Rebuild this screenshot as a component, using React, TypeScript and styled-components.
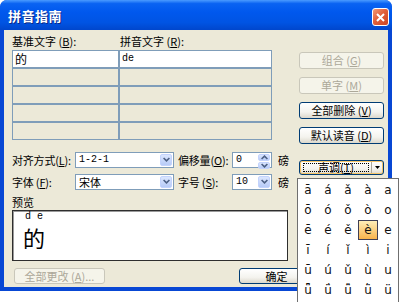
import styled, { createGlobalStyle } from "styled-components";

const GlobalStyle = createGlobalStyle`
  html, body {
    margin: 0;
    padding: 0;
    background: #fff;
    overflow: hidden;
  }
  body {
    font-family: "Noto Sans CJK SC", "Liberation Sans", sans-serif;
    font-size: 11px;
    color: #000;
  }
`;

const Stage = styled.div`
  position: relative;
  width: 400px;
  height: 302px;
  overflow: hidden;
`;

const Window = styled.div`
  width: 392px;
  height: 291px;
  display: flex;
  flex-direction: column;
  border-radius: 7px 7px 0 0;
  overflow: hidden;
  background: #0847d4;
`;

const TitleBar = styled.div`
  height: 30px;
  flex-shrink: 0;
  display: flex;
  align-items: center;
  padding: 0 3px 0 8px;
  background: linear-gradient(#4a9bff 0%, #0a63f2 12%, #0058ee 40%, #0054e3 75%, #0046cc 100%);
`;

const Title = styled.div`
  color: #fff;
  font-size: 13px;
  font-weight: bold;
  letter-spacing: 0.5px;
  text-shadow: 1px 1px 0 #0a2a8a;
`;

const CloseBtn = styled.div`
  margin-left: auto;
  margin-top: 4px;
  width: 17px;
  height: 18px;
  box-sizing: border-box;
  border: 1px solid #fff;
  border-radius: 3px;
  background: linear-gradient(135deg, #f09a78 0%, #e1603b 45%, #cc4422 100%);
  display: flex;
  align-items: center;
  justify-content: center;
`;

const Client = styled.div`
  flex: 1;
  margin: 0 4px 4px;
  padding: 0 4px 0 8px;
  background: #ece9d8;
  display: flex;
  flex-direction: column;
`;

const Upper = styled.div`
  display: flex;
  height: 160px;
`;

const LeftCol = styled.div`
  width: 284px;
  display: flex;
  flex-direction: column;
`;

const RightCol = styled.div`
  margin-left: auto;
  width: 85px;
  display: flex;
  flex-direction: column;
  gap: 8px;
  padding-top: 22px;
`;

const HeaderRow = styled.div`
  display: grid;
  grid-template-columns: 107px 153px;
  height: 20px;
  padding-top: 2px;
  box-sizing: border-box;
  line-height: 18px;
`;

const HeaderLabel = styled.span<{ $pad?: number }>`
  padding-left: ${(p) => p.$pad ?? 0}px;
  white-space: nowrap;
`;

const TextGrid = styled.div`
  display: grid;
  grid-template-columns: 107px 153px;
  grid-auto-rows: 18px;
`;

const Cell = styled.div<{ $active?: boolean; $mono?: boolean }>`
  box-sizing: border-box;
  border: 1px solid #7f9db9;
  background: ${(p) => (p.$active ? "#fff" : "#ece9d8")};
  padding-left: 2px;
  line-height: 15px;
  font-size: ${(p) => (p.$mono ? "10px" : "12px")};
  font-family: ${(p) =>
    p.$mono ? '"Liberation Mono", monospace' : '"Noto Sans CJK SC", sans-serif'};
`;

const OptionRow = styled.div<{ $top: number }>`
  display: flex;
  align-items: center;
  height: 17px;
  margin-top: ${(p) => p.$top}px;
`;

const FieldLabel = styled.span<{ $w: number; $left?: number }>`
  width: ${(p) => p.$w}px;
  margin-left: ${(p) => p.$left ?? 0}px;
  flex-shrink: 0;
  white-space: nowrap;
  letter-spacing: -0.2px;
`;

const Combo = styled.div<{ $w: number }>`
  width: ${(p) => p.$w}px;
  height: 16px;
  flex-shrink: 0;
  box-sizing: border-box;
  border: 1px solid #7f9db9;
  background: #fff;
  display: flex;
  align-items: stretch;
  padding: 1px;
`;

const ComboText = styled.span<{ $cjk?: boolean }>`
  flex: 1;
  padding-left: 2px;
  line-height: 12px;
  font-size: ${(p) => (p.$cjk ? "11px" : "10px")};
  font-family: ${(p) =>
    p.$cjk ? '"Noto Sans CJK SC", sans-serif' : '"Liberation Mono", monospace'};
`;

const ArrowBtn = styled.span`
  width: 12px;
  box-sizing: border-box;
  border: 1px solid #c3d3fd;
  border-radius: 2px;
  background: linear-gradient(#dbe6fe, #b7cbf7);
  display: flex;
  align-items: center;
  justify-content: center;
`;

const SpinBtns = styled.span`
  width: 12px;
  display: flex;
  flex-direction: column;
  gap: 1px;
`;

const SpinHalf = styled(ArrowBtn)`
  flex: 1;
  width: auto;
`;

const Unit = styled.span`
  margin-left: 6px;
`;

const PreviewLabel = styled.div`
  margin-top: 5px;
  height: 15px;
  line-height: 15px;
`;

const PreviewBox = styled.div`
  width: 276px;
  height: 51px;
  box-sizing: border-box;
  border: 1px solid #2e2e2e;
  box-shadow: inset 1px 1px 0 #9a9a9a;
  background: #fff;
  padding: 0 0 0 10px;
`;

const Ruby = styled.div`
  font-family: "Liberation Mono", monospace;
  font-size: 10px;
  line-height: 11px;
  padding-left: 2px;
`;

const Base = styled.div`
  font-family: "Noto Sans CJK SC", sans-serif;
  font-size: 22px;
  line-height: 24px;
  margin-top: 3px;
`;

const BottomRow = styled.div`
  display: flex;
  margin-top: 7px;
  height: 16px;
`;

const Btn = styled.div<{ $w?: number; $h?: number; $left?: number; $disabled?: boolean }>`
  width: ${(p) => (p.$w ? `${p.$w}px` : "auto")};
  height: ${(p) => p.$h ?? 17}px;
  margin-left: ${(p) => p.$left ?? 0}px;
  flex-shrink: 0;
  box-sizing: border-box;
  border: 1px solid ${(p) => (p.$disabled ? "#c9c7ba" : "#003c74")};
  border-radius: 3px;
  background: ${(p) =>
    p.$disabled ? "#f5f4ea" : "linear-gradient(#ffffff 0%, #f4f3ee 60%, #dcd8cc 100%)"};
  color: ${(p) => (p.$disabled ? "#aca899" : "#000")};
  display: flex;
  align-items: center;
  justify-content: center;
  white-space: nowrap;
  line-height: 13px;
`;

const SplitBtn = styled.div`
  margin-top: 8px;
  height: 15px;
  box-sizing: border-box;
  border: 1px solid #003c74;
  border-radius: 3px;
  background: linear-gradient(#ffffff 0%, #f4f3ee 60%, #dcd8cc 100%);
  box-shadow: inset 0 0 0 1px #f6c568;
  display: flex;
  padding: 1px;
`;

const SplitMain = styled.span`
  flex: 1;
  padding: 1px 2px;
  display: flex;
`;

const FocusRect = styled.span`
  flex: 1;
  border: 1px dotted #000;
  display: flex;
  align-items: center;
  justify-content: center;
  line-height: 9px;
`;

const SplitArrow = styled.span`
  width: 10px;
  border-left: 1px solid #aaa69a;
  display: flex;
  align-items: center;
  justify-content: center;
`;

const Popup = styled.div`
  position: absolute;
  left: 297px;
  top: 178px;
  width: 102px;
  height: 130px;
  box-sizing: border-box;
  border: 1px solid #6f6f6f;
  background: #fff;
  padding-top: 1px;
  display: grid;
  grid-template-columns: repeat(5, 20px);
  grid-auto-rows: 20px;
  align-content: start;
`;

const Tone = styled.span<{ $hot?: boolean }>`
  box-sizing: border-box;
  display: flex;
  align-items: center;
  justify-content: center;
  font-family: "DejaVu Sans", sans-serif;
  font-size: 12px;
  color: #111;
  border: 1px solid ${(p) => (p.$hot ? "#3f3f55" : "transparent")};
  background: ${(p) => (p.$hot ? "linear-gradient(#ffeeb8, #f8b34c)" : "transparent")};
`;

const Key = styled.u`
  text-decoration: underline;
`;

const Chevron = ({ up }: { up?: boolean }) => (
  <svg width="7" height="5" viewBox="0 0 7 5">
    <path
      d={up ? "M0.6 4 L3.5 1.1 L6.4 4" : "M0.6 1 L3.5 3.9 L6.4 1"}
      stroke="#4d6185"
      strokeWidth="1.6"
      fill="none"
    />
  </svg>
);

const tones = [
  ["ā", "á", "ǎ", "à", "a"],
  ["ō", "ó", "ǒ", "ò", "o"],
  ["ē", "é", "ě", "è", "e"],
  ["ī", "í", "ǐ", "ì", "i"],
  ["ū", "ú", "ǔ", "ù", "u"],
  ["ǖ", "ǘ", "ǚ", "ǜ", "ü"],
];

const App = () => {
  return (
    <Stage>
      <GlobalStyle />
      <Window>
        <TitleBar>
          <Title>拼音指南</Title>
          <CloseBtn>
            <svg width="9" height="9" viewBox="0 0 9 9">
              <path d="M1 1 L8 8 M8 1 L1 8" stroke="#fff" strokeWidth="2" />
            </svg>
          </CloseBtn>
        </TitleBar>
        <Client>
          <Upper>
            <LeftCol>
              <HeaderRow>
                <HeaderLabel>
                  基准文字 (<Key>B</Key>):
                </HeaderLabel>
                <HeaderLabel $pad={1}>
                  拼音文字 (<Key>R</Key>):
                </HeaderLabel>
              </HeaderRow>
              <TextGrid>
                <Cell $active>的</Cell>
                <Cell $active $mono>
                  de
                </Cell>
                {Array.from({ length: 8 }).map((_, i) => (
                  <Cell key={i} />
                ))}
              </TextGrid>
              <OptionRow $top={11}>
                <FieldLabel $w={63}>
                  对齐方式(<Key>L</Key>):
                </FieldLabel>
                <Combo $w={99}>
                  <ComboText>1-2-1</ComboText>
                  <ArrowBtn>
                    <Chevron />
                  </ArrowBtn>
                </Combo>
                <FieldLabel $w={54} $left={4}>
                  偏移量(<Key>O</Key>):
                </FieldLabel>
                <Combo $w={40}>
                  <ComboText>0</ComboText>
                  <SpinBtns>
                    <SpinHalf>
                      <Chevron up />
                    </SpinHalf>
                    <SpinHalf>
                      <Chevron />
                    </SpinHalf>
                  </SpinBtns>
                </Combo>
                <Unit>磅</Unit>
              </OptionRow>
              <OptionRow $top={5}>
                <FieldLabel $w={63}>
                  字体 (<Key>F</Key>):
                </FieldLabel>
                <Combo $w={99}>
                  <ComboText $cjk>宋体</ComboText>
                  <ArrowBtn>
                    <Chevron />
                  </ArrowBtn>
                </Combo>
                <FieldLabel $w={54} $left={4}>
                  字号 (<Key>S</Key>):
                </FieldLabel>
                <Combo $w={40}>
                  <ComboText>10</ComboText>
                  <ArrowBtn>
                    <Chevron />
                  </ArrowBtn>
                </Combo>
                <Unit>磅</Unit>
              </OptionRow>
            </LeftCol>
            <RightCol>
              <Btn $disabled>
                组合 (<Key>G</Key>)
              </Btn>
              <Btn $disabled>
                单字 (<Key>M</Key>)
              </Btn>
              <Btn>
                全部删除 (<Key>V</Key>)
              </Btn>
              <Btn>
                默认读音 (<Key>D</Key>)
              </Btn>
              <SplitBtn>
                <SplitMain>
                  <FocusRect>
                    声调(<Key>T</Key>)
                  </FocusRect>
                </SplitMain>
                <SplitArrow>
                  <svg width="5" height="3" viewBox="0 0 5 3">
                    <path d="M0 0 H5 L2.5 3 Z" fill="#000" />
                  </svg>
                </SplitArrow>
              </SplitBtn>
            </RightCol>
          </Upper>
          <PreviewLabel>预览</PreviewLabel>
          <PreviewBox>
            <Ruby>d e</Ruby>
            <Base>的</Base>
          </PreviewBox>
          <BottomRow>
            <Btn $disabled $w={91} $h={16} $left={2}>
              全部更改 (<Key>A</Key>)...
            </Btn>
            <Btn $w={75} $h={16} $left={134}>
              确定
            </Btn>
          </BottomRow>
        </Client>
      </Window>
      <Popup>
        {tones.flat().map((t, i) => (
          <Tone key={i} $hot={t === "è"}>
            {t}
          </Tone>
        ))}
      </Popup>
    </Stage>
  );
};

export default App;
